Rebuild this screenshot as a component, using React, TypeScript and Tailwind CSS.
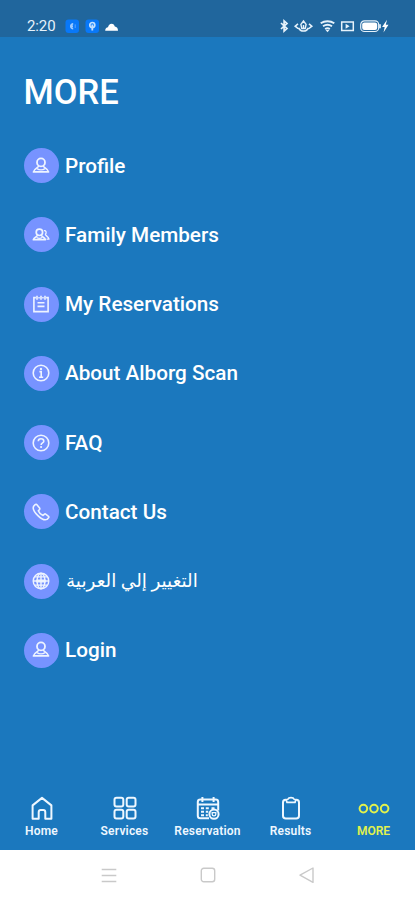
import type { ReactNode } from 'react';

const PersonIcon = () => (
    <svg viewBox="0 0 18 18" className="w-[18px] h-[18px]" fill="none" stroke="currentColor" strokeWidth="1.8" strokeLinejoin="round">
        <circle cx="9" cy="5.4" r="4" />
        <path d="M6.9 8.7c-.2 2-4.4 2.6-5.5 6.2h15.2c-1.1-3.6-5.3-4.2-5.5-6.2" strokeWidth="1.6" />
        <path d="M5 11.6c2.2 1.5 5.8 1.5 8 0" strokeWidth="1.3" />
    </svg>
);

const FamilyIcon = () => (
    <svg viewBox="0 0 18 18" className="w-[18px] h-[18px]" fill="none" stroke="currentColor" strokeWidth="1.7" strokeLinejoin="round">
        <circle cx="7.4" cy="6.3" r="3.2" />
        <path d="M5.6 9.2c-.3 1.6-3.5 2-4.3 4.5h12.2c-.8-2.5-4-2.9-4.3-4.5" strokeWidth="1.6" />
        <path d="M4.6 11.6c1.7.9 3.9.9 5.6 0" strokeWidth="1.3" />
        <path d="M11.9 4.7c2.2-.4 3 1.9 1.5 3.6.2 1.9 3 1.8 3.6 4.9h-2.4" strokeWidth="1.3" />
    </svg>
);

const NotesIcon = () => (
    <svg viewBox="0 0 18 18" className="w-[18px] h-[18px]" fill="none" stroke="currentColor" strokeWidth="1.6">
        <path d="M3.9 2.6H1.9v14h14.2v-14h-2M6.3 2.8h1.5M10.2 2.8h1.5M5 .8v4M9 .8v4M13 .8v4M5.5 7.8h7M5.5 11.4h7" />
    </svg>
);

const InfoIcon = () => (
    <svg viewBox="0 0 18 18" className="w-[18px] h-[18px]" fill="none" stroke="currentColor" strokeWidth="1.6">
        <circle cx="9" cy="9" r="7.8" />
        <path d="M7.4 7.6h1.8v5.6M7 13.2h4.2" strokeWidth="1.6" />
        <circle cx="9" cy="4.9" r="1.2" fill="currentColor" stroke="none" />
    </svg>
);

const QuestionIcon = () => (
    <svg viewBox="0 0 18 18" className="w-[18px] h-[18px]" fill="none" stroke="currentColor" strokeWidth="1.6">
        <circle cx="9" cy="9" r="7.8" />
        <path d="M6.3 7.2c0-3.3 5.5-3.3 5.5 0 0 1.8-2.7 1.7-2.7 3.7" />
        <circle cx="9.1" cy="13" r="1.1" fill="currentColor" stroke="none" />
    </svg>
);

const PhoneIcon = () => (
    <svg viewBox="0 0 18 18" className="w-[18px] h-[18px]" fill="none" stroke="currentColor" strokeWidth="1.6" strokeLinejoin="round">
        <path d="M3.2 1.6 1.6 3.2c-1 2.3 1 6.3 4.3 9.4 3.1 3 7 4.8 9.1 3.8l1.6-1.6c.4-.5.3-1.1-.1-1.5l-2.8-2.1c-.5-.4-1-.3-1.5.1L11 12.4c-1.8-.6-4-2.8-4.7-4.6l1.2-1.2c.4-.5.4-1 .1-1.5L4.9 1.8c-.4-.5-1.1-.7-1.7-.2Z" />
    </svg>
);

const GlobeIcon = () => (
    <svg viewBox="0 0 18 18" className="w-[18px] h-[18px]" fill="none" stroke="currentColor" strokeWidth="1.4">
        <circle cx="9" cy="9" r="7.8" />
        <ellipse cx="9" cy="9" rx="3.9" ry="7.8" />
        <path d="M9 1v16M1.2 9h15.6M2.5 4.9h13M2.5 13.1h13" />
        <path d="M4.2 9h9.6" strokeWidth="3" />
    </svg>
);

const HomeIcon = () => (
    <svg viewBox="0 0 24 24" className="w-6 h-6" fill="none" stroke="currentColor" strokeWidth="2" strokeLinejoin="round">
        <path d="M2.6 9.4 12 1.9l9.4 7.5v13.4h-6.1v-6.6c0-1.5-.7-2.2-2-2.2h-2.6c-1.3 0-2 .7-2 2.2v6.6H2.6Z" />
    </svg>
);

const ServicesIcon = () => (
    <svg viewBox="0 0 24 24" className="w-6 h-6" fill="none" stroke="currentColor" strokeWidth="2">
        <rect x="1.5" y="1.8" width="8.8" height="8.8" rx="2" />
        <rect x="13.7" y="1.8" width="8.8" height="8.8" rx="2" />
        <rect x="1.5" y="13.8" width="8.8" height="8.8" rx="2" />
        <rect x="13.7" y="13.8" width="8.8" height="8.8" rx="2" />
    </svg>
);

const CalendarIcon = () => (
    <svg viewBox="0 0 24 24" className="w-6 h-6" fill="none" stroke="currentColor" strokeWidth="2">
        <path d="M13 22.3H4.4c-1.6 0-2.6-1-2.6-2.6V6c0-1.5 1-2.4 2.6-2.4h15.2c1.6 0 2.6.9 2.6 2.4v8.6" />
        <path d="M1.8 8.6h20.4M6.4 1v5M17.6 1v5" />
        <path d="M5 12.2h3M9.8 12.2h3M15.5 12.2h3M5 15.7h3M9.8 15.7h2.4M5 19.2h3M9.8 19.2h2" />
        <circle cx="18" cy="18.2" r="4.6" fill="#1b78be" />
        <path d="M16.2 16.6v1.6c0 2.3 3.6 2.3 3.6 0v-1.6Z" strokeWidth="1.3" />
    </svg>
);

const ClipboardIcon = () => (
    <svg viewBox="0 0 24 24" className="w-6 h-6" fill="none" stroke="currentColor" strokeWidth="2" strokeLinejoin="round">
        <path d="M7.2 3.8h-.6C5 3.8 4 4.8 4 6.4v13.4c0 1.8 1 2.8 2.8 2.8h10.4c1.8 0 2.8-1 2.8-2.8V6.4c0-1.6-1-2.6-2.6-2.6h-.6" />
        <path d="M8 6.4h8l.8-2.6-1.7-.6c-.4-1.1-1.3-1.6-3.1-1.6s-2.7.5-3.1 1.6l-1.7.6Z" strokeWidth="1.7" />
    </svg>
);

const DotsIcon = () => (
    <svg viewBox="0 0 32 24" className="w-8 h-6" fill="none" stroke="currentColor" strokeWidth="2">
        <circle cx="5.4" cy="12.6" r="3.8" />
        <circle cx="16" cy="12.6" r="3.8" />
        <circle cx="26.6" cy="12.6" r="3.8" />
    </svg>
);

const menu: { label: string; icon: ReactNode; arabic?: boolean }[] = [
    { label: 'Profile', icon: <PersonIcon /> },
    { label: 'Family Members', icon: <FamilyIcon /> },
    { label: 'My Reservations', icon: <NotesIcon /> },
    { label: 'About Alborg Scan', icon: <InfoIcon /> },
    { label: 'FAQ', icon: <QuestionIcon /> },
    { label: 'Contact Us', icon: <PhoneIcon /> },
    { label: 'التغيير إلي العربية', icon: <GlobeIcon />, arabic: true },
    { label: 'Login', icon: <PersonIcon /> },
];

const tabs: { label: string; icon: ReactNode; active?: boolean }[] = [
    { label: 'Home', icon: <HomeIcon /> },
    { label: 'Services', icon: <ServicesIcon /> },
    { label: 'Reservation', icon: <CalendarIcon /> },
    { label: 'Results', icon: <ClipboardIcon /> },
    { label: 'MORE', icon: <DotsIcon />, active: true },
];

function StatusBar() {
    return (
        <header className="h-[37px] shrink-0 bg-[#20669d] flex items-center pt-[16px] pb-px pl-[27px] pr-[25px] text-[#e6f2fb]">
            <span className="text-[15px] leading-5 w-[38px] tracking-[-0.1px]">2:20</span>
            <svg viewBox="0 0 56 16" className="w-14 h-4">
                <rect x="0.5" y="1.5" width="13.5" height="13.5" rx="3" fill="#0878f8" />
                <path d="M8.2 5.8a2.4 2.4 0 1 0 0 4.8M6 8.2h2" stroke="#9dcbff" strokeWidth="1.7" fill="none" />
                <path d="M10.2 6.4v3.6" stroke="#5ba6ff" strokeWidth="1" />
                <rect x="20.5" y="1.5" width="13.5" height="13.5" rx="3" fill="#0878f8" />
                <circle cx="27.3" cy="7" r="2.5" stroke="#c2e0ff" strokeWidth="1.7" fill="none" />
                <path d="M27.3 6.5v6" stroke="#c2e0ff" strokeWidth="1.8" />
                <path d="M40.7 12.7c0-2.2 1.2-3.2 2.8-3.4.5-2.2 1.8-3.6 3.5-3.6 2 0 2.8 1.3 3.3 2.7 2.1.2 3.2 1.7 3.2 4.3Z" transform="translate(-0.5 0)" fill="#fff" />
            </svg>
            <svg viewBox="0 0 112 16" className="w-28 h-4 ml-auto" fill="none" stroke="currentColor" strokeWidth="1.7">
                <path d="m3 5 6 5.6L6.1 13.2V2.8L9 5.4 3 11" />
                <path d="m20 5.8-2.8 2.4 2.8 2.3M31 5.8l2.8 2.4-2.8 2.3M20.5 9.8c2 4.2 8 4.2 10 0" strokeWidth="1.6" />
                <path d="m25.5 3 2.6 3.3-.9 4.2h-3.4l-.9-4.2ZM25.5 7v3" strokeWidth="1.4" />
                <path d="M42.7 5.2c4-2.7 9.6-2.7 13.6 0M45 8.3c2.8-1.9 6.2-1.9 9 0M47.1 11c1.4-.9 3.4-.9 4.8 0" strokeWidth="1.9" />
                <path d="m47.6 12 1.9 2.2 1.9-2.2Z" fill="currentColor" stroke="none" />
                <path d="M67 4h-3.3v8.6H67M72 4h3.3v8.6H72M66 4h7M66 12.6h7" strokeWidth="1.5" />
                <path d="m67.6 5.8 4 2.5-4 2.5Z" fill="currentColor" stroke="none" />
                <rect x="82.7" y="2.9" width="18" height="10.6" rx="3.8" strokeWidth="1.2" />
                <rect x="84.2" y="4.4" width="15" height="7.6" rx="2.2" fill="#fff" stroke="none" />
                <path d="M102 6.2v4" />
                <path d="m109 1.8-4.9 7.2h2.6l-1.2 5.4 5-7.6h-2.7Z" fill="#fff" stroke="none" />
            </svg>
        </header>
    );
}

export default function App() {
    return (
        <div className="w-full h-[900px] flex flex-col overflow-hidden bg-[#1b78be] font-['Roboto','DejaVu_Sans',sans-serif] text-white">
            <StatusBar />

            <main className="flex-1 min-h-0 px-[23.5px]">
                <h1 className="mt-[35px] h-10 text-[34.5px] leading-10 font-medium">MORE</h1>
                <ul className="mt-9 flex flex-col gap-[34.25px]">
                    {menu.map((item) => (
                        <li key={item.label} className="flex items-center h-[35px] gap-[6.5px]">
                            <span className="w-[35px] h-[35px] shrink-0 rounded-full bg-[#7793ff] flex items-center justify-center text-[#eef4ff]">
                                {item.icon}
                            </span>
                            {item.arabic ? (
                                <span dir="rtl" lang="ar" className="pl-px text-[18.4px] leading-6 whitespace-nowrap">{item.label}</span>
                            ) : (
                                <span className="text-[20.7px] leading-6 font-medium whitespace-nowrap">{item.label}</span>
                            )}
                        </li>
                    ))}
                </ul>
            </main>

            {/* Bottom tabs */}
            <nav className="h-[70px] shrink-0 grid grid-cols-5 pt-4">
                {tabs.map((tab) => (
                    <div key={tab.label} className={tab.active ? 'flex flex-col items-center text-[#e2f24c]' : 'flex flex-col items-center text-[#eef7ff]'}>
                        {tab.icon}
                        <span className={tab.active ? 'mt-[3px] text-[12px] leading-4 font-semibold' : 'mt-[3px] text-[12px] leading-4 font-semibold tracking-[0.2px]'}>{tab.label}</span>
                    </div>
                ))}
            </nav>

            {/* System navigation */}
            <footer className="h-[50px] shrink-0 bg-white flex items-center justify-center gap-[83px] text-[#c9c9c9]">
                <svg viewBox="0 0 16 16" className="w-4 h-4" fill="none" stroke="currentColor" strokeWidth="1.3">
                    <path d="M.7 2.5h14.6M.7 8.5h14.6M.7 14.5h14.6" />
                </svg>
                <svg viewBox="0 0 16 16" className="w-4 h-4" fill="none" stroke="currentColor" strokeWidth="1.4">
                    <rect x="1.3" y="1.3" width="13.4" height="13.4" rx="2.5" />
                </svg>
                <svg viewBox="0 0 16 16" className="w-4 h-4" fill="none" stroke="currentColor" strokeWidth="1.4" strokeLinejoin="round">
                    <path d="M14 1v14.4L1 8.2Z" />
                </svg>
            </footer>
        </div>
    );
}
